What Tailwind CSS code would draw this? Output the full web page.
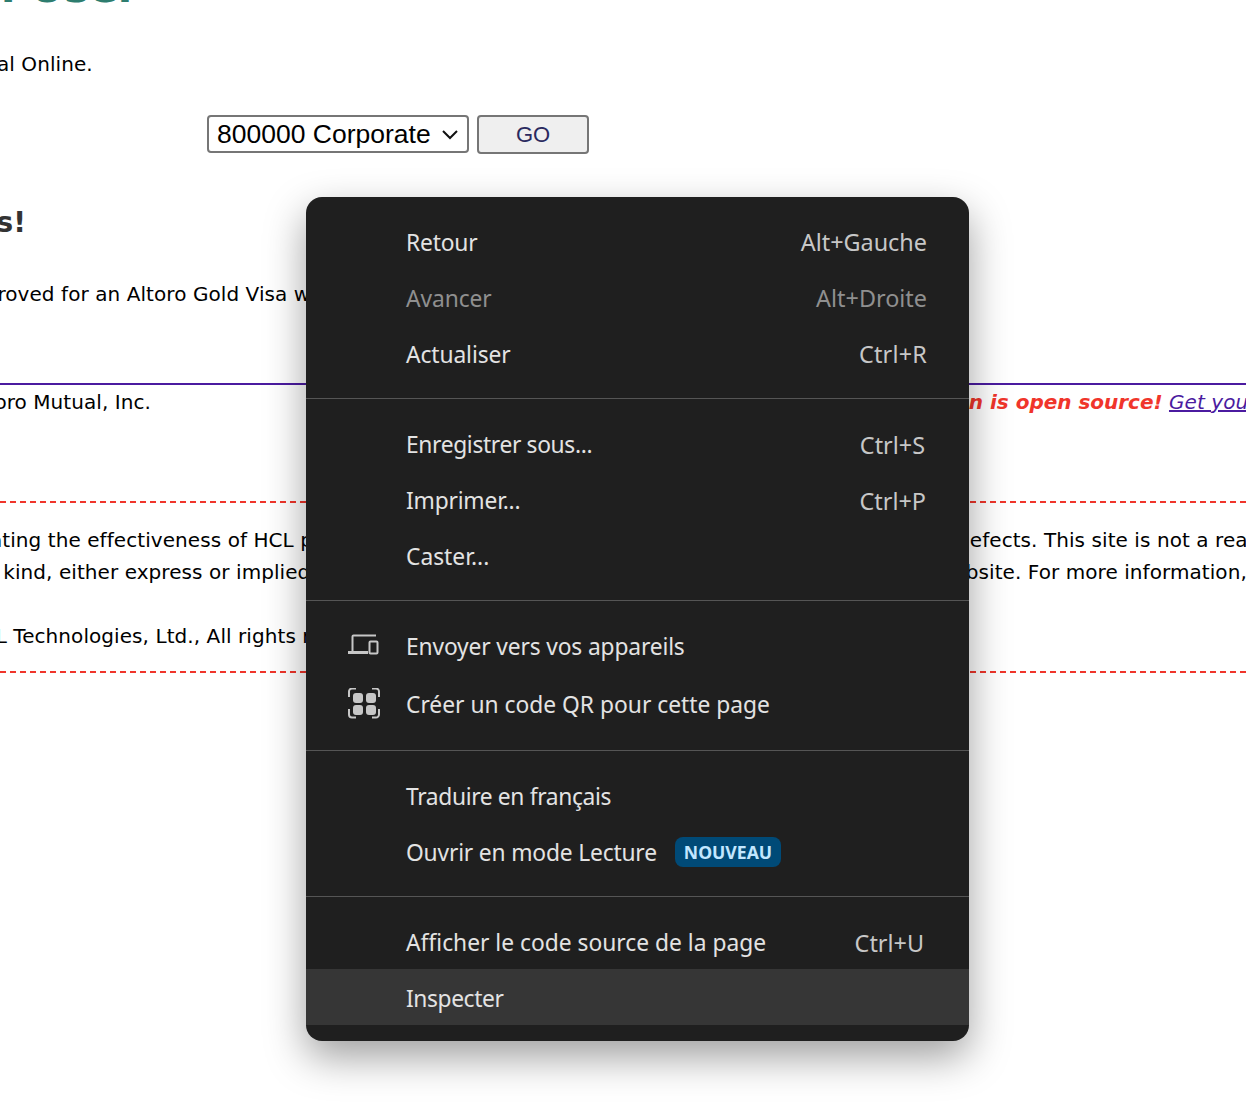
<!DOCTYPE html>
<html>
<head>
<meta charset="utf-8">
<script src="https://cdn.jsdelivr.net/npm/@tailwindcss/browser@4"></script>
</head>
<body class="bg-white">
<div class="relative w-[1246px] h-[1116px] overflow-hidden bg-white text-black font-['DejaVu_Sans',sans-serif] text-[20px] leading-8 tracking-[0.07px]">
  <!-- page -->
  <div class="h-[8px] relative overflow-hidden"><div class="absolute bottom-[-1px] left-[-272px] whitespace-nowrap font-bold text-[42px] leading-none text-[#2e7d6f]">Hello Admin User</div></div>
  <div class="h-[40px]"></div>
  <div class="h-[32px] -ml-[245px] whitespace-nowrap">Welcome to Altoro Mutual Online.</div>
  <div class="h-[35px]"></div>
  <div class="flex items-start gap-2 ml-[207px] h-[38px]">
    <div class="relative w-[262px] h-[38px]">
      <select class="appearance-none w-[262px] h-[38px] border-2 border-[#767676] rounded-[4px] bg-white pl-2 font-['Liberation_Sans',sans-serif] text-[26.5px] text-black tracking-normal"><option>800000 Corporate</option></select>
      <svg class="absolute left-[234px] top-[14px] w-[18px] h-[12px] pointer-events-none" viewBox="0 0 18 12" fill="none" stroke="#111" stroke-width="2"><path d="M2 2l7 7 7-7"/></svg>
    </div>
    <button class="w-[112px] h-[39px] border-2 border-[#767676] rounded-[4px] bg-[#efefef] font-['Liberation_Sans',sans-serif] text-[22px] text-[#2a2a5f] tracking-normal">GO</button>
  </div>
  <div class="h-[50px]"></div>
  <div class="h-[40px] -ml-[241px] whitespace-nowrap font-bold text-[28px] leading-[40px] text-[#333]">Congratulations!</div>
  <div class="h-[35px]"></div>
  <div class="h-[32px] -ml-[194px] whitespace-nowrap">You have been approved for an Altoro Gold Visa with a credit limit</div>
  <div class="h-[73px]"></div>
  <div class="h-[2px] bg-[#4b1ba0]"></div>
  <div class="flex justify-between h-[32px] pt-px whitespace-nowrap">
    <div class="-ml-[117px]">© 2024 Altoro Mutual, Inc.</div>
    <div class="w-[277px] shrink-0 overflow-hidden"><div class="flex"><div class="w-[21px] shrink-0 flex justify-end font-bold italic text-[#f0352b]"><span class="shrink-0">This web application&nbsp;</span></div><span class="font-bold italic text-[#f0352b] shrink-0 -tracking-[0.02px]">is open source!</span><span class="shrink-0">&nbsp;</span><a class="italic underline text-[#4b1ba0] shrink-0">Get your copy</a></div></div>
  </div>
  <div class="h-[84px]"></div>
  <div class="border-t-2 border-dashed border-[#f0352b]"></div>
  <div class="h-[21px]"></div>
  <div class="h-[32px] flex justify-between whitespace-nowrap"><div class="-ml-[65px]">evaluating the effectiveness of HCL products</div><div class="w-[277px] shrink-0 overflow-hidden"><div class="-ml-[12px]">defects. This site is not a real</div></div></div>
  <div class="h-[32px] flex justify-between whitespace-nowrap"><div class="-ml-[66px]">of any kind, either express or implied</div><div class="w-[277px] shrink-0 overflow-hidden"><div class="-ml-[32px]">website. For more information,</div></div></div>
  <div class="h-[32px]"></div>
  <div class="h-[32px] whitespace-nowrap -ml-[60px]">© HCL Technologies, Ltd., All rights reserved</div>
  <div class="h-[19px]"></div>
  <div class="border-t-2 border-dashed border-[#f0352b]"></div>

  <!-- context menu -->
  <div class="absolute left-[306px] top-[197px] w-[663px] h-[844px] rounded-[16px] bg-[#1f1f1f] pt-[16px] pb-[16px] text-[#e3e3e3] font-['Noto_Sans',sans-serif] text-[22.8px] leading-8 tracking-normal shadow-[0_16px_40px_rgba(0,0,0,0.38)] overflow-hidden">
    <div class="flex items-center justify-between h-[56px] pt-[4px] pl-[100px] pr-[42px]"><span class="tracking-[-0.2px]">Retour</span><span class="-mt-[2px] text-[23.4px] text-[#c7c7c7]">Alt+Gauche</span></div>
    <div class="flex items-center justify-between h-[56px] pt-[4px] pl-[100px] pr-[42px] text-[#8f8f8f]"><span class="tracking-[-0.1px]">Avancer</span><span class="-mt-[2px] text-[23.4px]">Alt+Droite</span></div>
    <div class="flex items-center justify-between h-[56px] pt-[4px] pl-[100px] pr-[42px]"><span class="tracking-[-0.1px]">Actualiser</span><span class="-mt-[2px] text-[23.4px] text-[#c7c7c7] tracking-[0.2px]">Ctrl+R</span></div>
    <div class="h-px bg-[#555] mt-[17px] mb-[16px]"></div>
    <div class="flex items-center justify-between h-[56px] pt-[4px] pl-[100px] pr-[44px]"><span class="tracking-[-0.35px]">Enregistrer sous...</span><span class="text-[23.4px] text-[#c7c7c7]">Ctrl+S</span></div>
    <div class="flex items-center justify-between h-[56px] pt-[4px] pl-[100px] pr-[43px]"><span class="tracking-[-0.2px]">Imprimer...</span><span class="text-[23.4px] text-[#c7c7c7]">Ctrl+P</span></div>
    <div class="flex items-center justify-between h-[56px] pt-[4px] pl-[100px] pr-[44px]"><span>Caster...</span></div>
    <div class="h-px bg-[#555] mt-[17px] mb-[16px]"></div>
    <div class="flex items-center h-[58px] pl-[42px]">
      <svg class="w-[32px] h-[24px] mr-[26px] shrink-0" viewBox="0 0 32 24" fill="none" stroke="#c7c7c7" stroke-width="2"><path d="M4.500 17V2.500a1 1 0 0 1 1-1H28"/><path d="M0 18.500H20" stroke-width="3"/><rect x="21.500" y="7.500" width="8" height="12" rx="1"/></svg>
      <span class="pt-[2px] tracking-[-0.15px]">Envoyer vers vos appareils</span>
    </div>
    <div class="flex items-center h-[58px] pl-[42px]">
      <svg class="w-[32px] h-[32px] mr-[26px] shrink-0" viewBox="0 1 32 32" fill="none"><path d="M8 1.500H4A3 3 0 0 0 1 4.500V10M24 1.500H28A3 3 0 0 1 31 4.500V10M8 30.500H4A3 3 0 0 1 1 27.500V22M24 30.500H28A3 3 0 0 0 31 27.500V22" stroke="#c7c7c7" stroke-width="2"/><rect x="5" y="6" width="10" height="10" rx="3" fill="#c7c7c7"/><rect x="18" y="6" width="10" height="10" rx="3" fill="#c7c7c7"/><rect x="5" y="18" width="10" height="10" rx="3" fill="#c7c7c7"/><rect x="18" y="18" width="10" height="10" rx="3" fill="#c7c7c7"/></svg>
      <span class="pt-[2px]">Créer un code QR pour cette page</span>
    </div>
    <div class="h-px bg-[#555] mt-[17px] mb-[16px]"></div>
    <div class="flex items-center h-[56px] pt-[4px] pl-[100px]"><span class="tracking-[-0.35px]">Traduire en français</span></div>
    <div class="flex items-center h-[56px] pl-[100px]"><span class="pt-[4px] tracking-[-0.18px]">Ouvrir en mode Lecture</span><span class="ml-[18px] mt-[2px] h-[30px] px-[9px] rounded-[8px] bg-[#004a77] text-[#c2e7ff] font-bold text-[17.6px] leading-[30px]">NOUVEAU</span></div>
    <div class="h-px bg-[#555] mt-[17px] mb-[16px]"></div>
    <div class="flex items-center justify-between h-[56px] pt-[4px] pl-[100px] pr-[45px]"><span>Afficher le code source de la page</span><span class="text-[23.4px] text-[#c7c7c7]">Ctrl+U</span></div>
    <div class="flex items-center h-[56px] pt-[4px] pl-[100px] bg-[#363636]"><span class="tracking-[-0.4px]">Inspecter</span></div>
  </div>
</div>
</body>
</html>
